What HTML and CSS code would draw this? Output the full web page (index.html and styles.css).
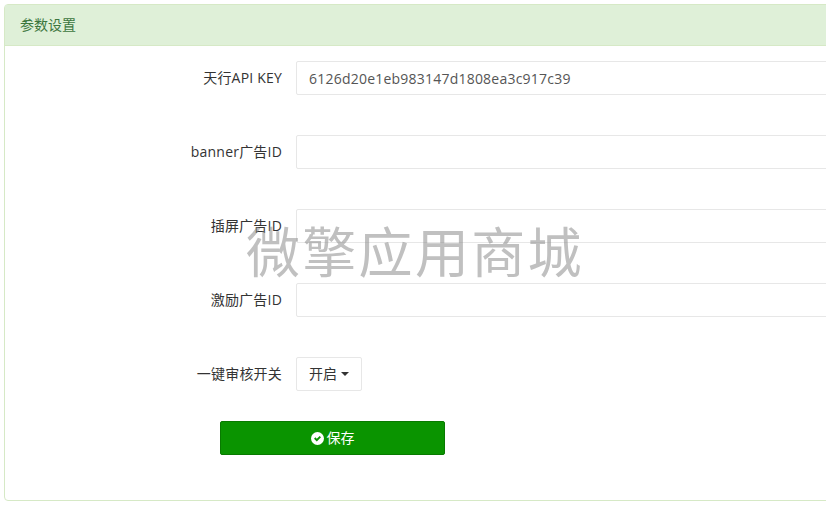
FILE: index.html
```html
<!DOCTYPE html>
<html lang="zh-CN">
<head>
    <meta charset="UTF-8">
    <title>参数设置</title>
    <link rel="stylesheet" href="styles.css">
</head>
<body>
    <div class="panel">
        <div class="panel-heading">参数设置</div>
        <form class="panel-body">
            <div class="form-group">
                <label class="control-label">天行API KEY</label>
                <input class="form-control" type="text" value="6126d20e1eb983147d1808ea3c917c39">
            </div>
            <div class="form-group">
                <label class="control-label">banner广告ID</label>
                <input class="form-control" type="text">
            </div>
            <div class="form-group">
                <label class="control-label">插屏广告ID</label>
                <input class="form-control" type="text">
            </div>
            <div class="form-group">
                <label class="control-label">激励广告ID</label>
                <input class="form-control" type="text">
            </div>
            <div class="form-group form-group-last">
                <label class="control-label">一键审核开关</label>
                <button class="btn-select" type="button"><span class="btn-text">开启</span> <span class="caret"></span></button>
            </div>
            <div class="form-actions">
                <button class="btn-save" type="button">
                    <svg class="icon-check" viewBox="0 0 24 24"><circle cx="12" cy="12" r="12" fill="#fff"/><path d="M5.6 12.4l2.5-2.5 2.6 2.6 5.3-5.3 2.5 2.5-7.8 7.8z" fill="#0a9400"/></svg>
                    <span class="btn-text">保存</span>
                </button>
            </div>
        </form>
    </div>
    <div class="watermark">微擎应用商城</div>
</body>
</html>
```

FILE: styles.css
```css
/* Basic Reset */
* {
    margin: 0;
    padding: 0;
    box-sizing: border-box;
}

body {
    font-family: "Open Sans", "Noto Sans CJK SC", sans-serif;
    font-size: 14px;
    color: #333;
    background: #fff;
    padding: 4px 0 0 4px;
    overflow: hidden;
}

/* Wider than the window, the right edge is cut off like in the original */
.panel {
    width: 1000px;
    border: 1px solid #d6e9c6;
    border-radius: 4px;
}

.panel-heading {
    height: 41px;
    padding: 0 15px;
    line-height: 39px;
    font-size: 14px;
    color: #3c763d;
    background: #dff0d8;
    border-bottom: 1px solid #d6e9c6;
}

.panel-body {
    padding: 15px 0;
}

.form-group {
    display: flex;
    align-items: center;
    margin-bottom: 40px;
}

.form-group-last {
    margin-bottom: 30px;
}

.control-label {
    width: 291px;
    padding: 0 14px 2px 0;
    text-align: right;
    letter-spacing: 0.2px;
}

.form-control {
    flex: 1;
    height: 34px;
    padding: 0 12px;
    font: inherit;
    letter-spacing: 0.22px;
    color: #555;
    background: #fff;
    border: 1px solid #e7e7e7;
    border-radius: 2px;
}

.btn-select {
    display: flex;
    align-items: center;
    height: 34px;
    padding: 0 12px;
    font: inherit;
    color: #333;
    background: #fff;
    border: 1px solid #e7e7e7;
    border-radius: 2px;
}

.btn-text {
    padding-bottom: 3px;
}

.caret {
    margin-left: 4px;
    border-top: 4px solid #333;
    border-left: 4px solid transparent;
    border-right: 4px solid transparent;
}

.form-actions {
    padding-left: 215px;
    margin-bottom: 30px;
}

.btn-save {
    display: flex;
    align-items: center;
    justify-content: center;
    gap: 3px;
    width: 225px;
    height: 34px;
    font: inherit;
    color: #fff;
    background: #0a9400;
    border: 1px solid #087a00;
    border-radius: 2px;
}

.icon-check {
    width: 13px;
    height: 13px;
}

/* Sits over the form */
.watermark {
    position: absolute;
    left: 246px;
    top: 218px;
    font-size: 54px;
    line-height: 68px;
    letter-spacing: 2.3px;
    color: rgba(140, 140, 140, 0.55);
    white-space: nowrap;
    pointer-events: none;
}
```
